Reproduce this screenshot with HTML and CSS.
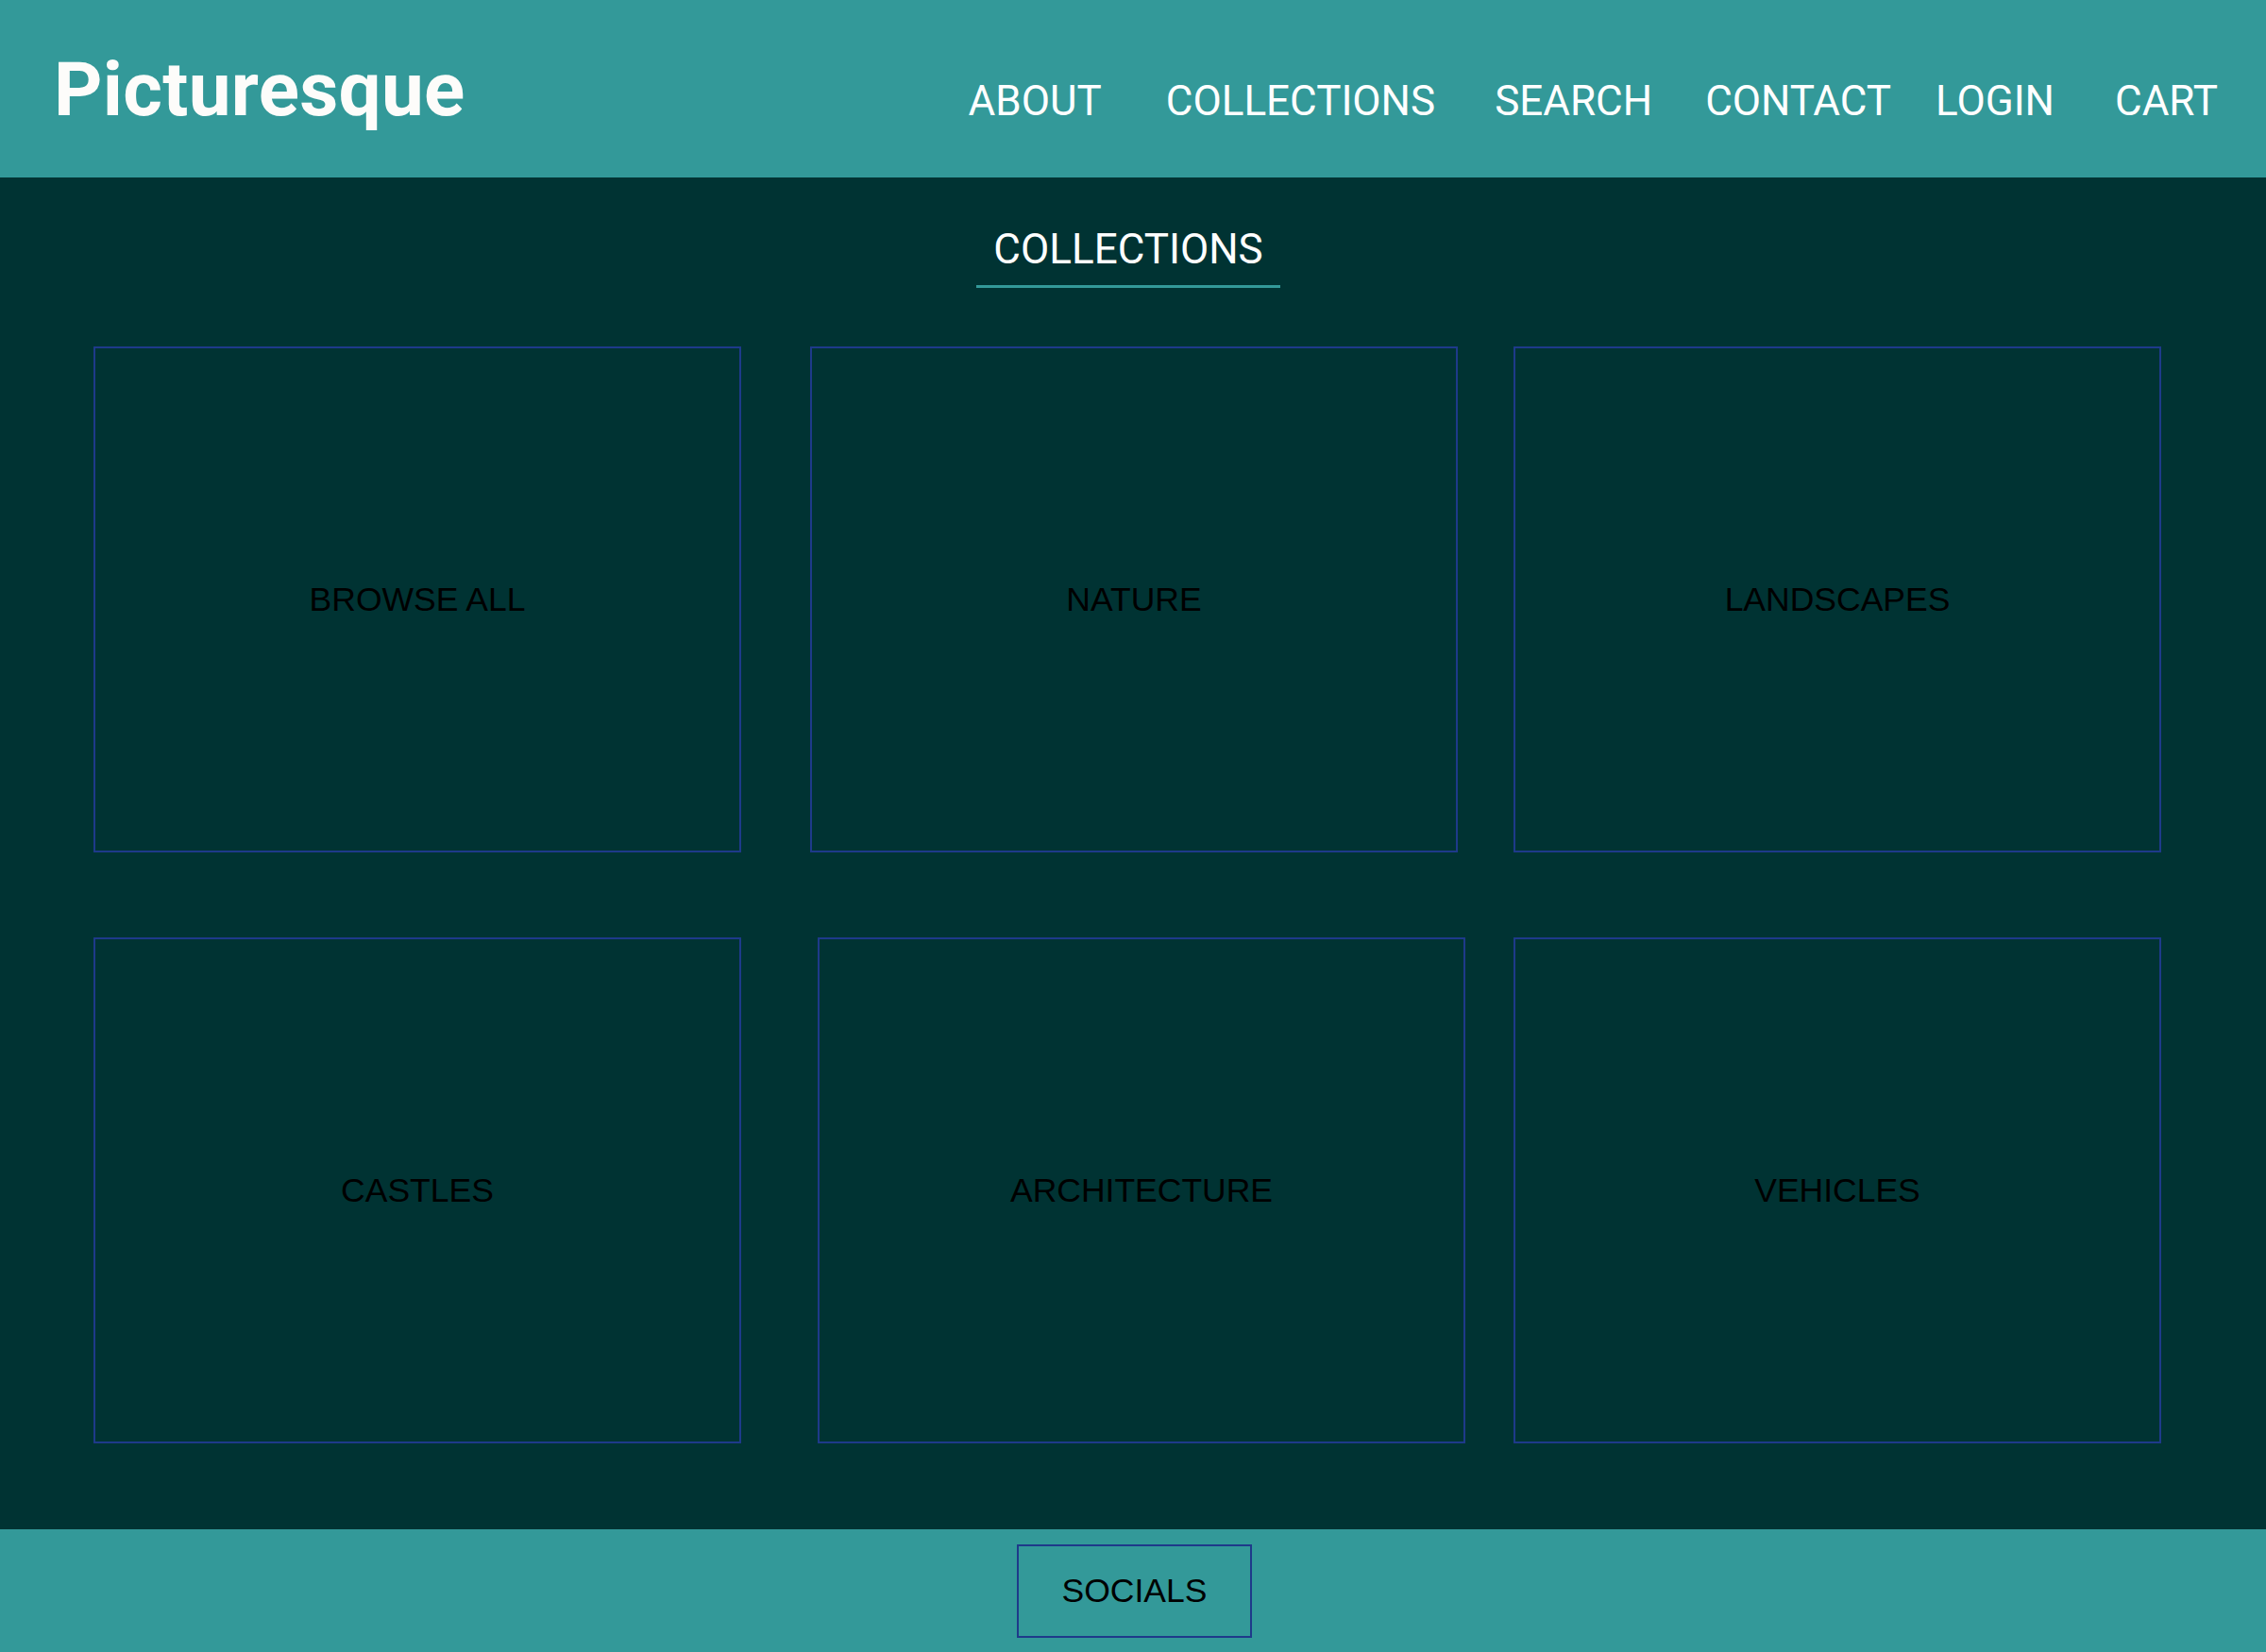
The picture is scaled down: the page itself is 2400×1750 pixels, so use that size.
FILE: index.html
```html
<!DOCTYPE html>
<html lang="en">
<head>
<meta charset="utf-8">
<title>Picturesque - Collections</title>
<link rel="stylesheet" href="styles.css">
</head>
<body>
<header class="site-header">
  <div class="logo">Picturesque</div>
  <nav class="nav">
    <a class="nav-item n-about" href="#">ABOUT</a>
    <a class="nav-item n-collections" href="#">COLLECTIONS</a>
    <a class="nav-item n-search" href="#">SEARCH</a>
    <a class="nav-item n-contact" href="#">CONTACT</a>
    <a class="nav-item n-login" href="#">LOGIN</a>
    <a class="nav-item n-cart" href="#">CART</a>
  </nav>
</header>
<main class="main">
  <div class="title-wrap">
    <h2 class="title">COLLECTIONS</h2>
  </div>
  <div class="cards">
    <div class="card">BROWSE ALL</div>
    <div class="card shift-1">NATURE</div>
    <div class="card">LANDSCAPES</div>
    <div class="card">CASTLES</div>
    <div class="card shift-2">ARCHITECTURE</div>
    <div class="card">VEHICLES</div>
  </div>
</main>
<footer class="site-footer">
  <div class="socials">SOCIALS</div>
</footer>
</body>
</html>
```
FILE: styles.css
```css
* { box-sizing: border-box; }
html, body { margin: 0; padding: 0; }
body {
  width: 2400px;
  height: 1750px;
  overflow: hidden;
  background: #003333;
  font-family: "Liberation Sans", Arial, sans-serif;
}
.site-header {
  height: 188px;
  background: #339999;
  display: flex;
  align-items: baseline;
  padding: 48px 51px 0 57px;
}
.logo {
  font-family: Roboto, "Noto Sans", sans-serif;
  font-weight: 700;
  font-size: 80px;
  color: #fdfcfa;
  letter-spacing: 0.3px;
}
.nav {
  margin-left: auto;
  display: flex;
  align-items: baseline;
}
.nav-item {
  font-family: Roboto, "Noto Sans", sans-serif;
  font-size: 44px;
  color: #ffffff;
  text-decoration: none;
}
.n-collections { margin-left: 68px; }
.n-search { margin-left: 63px; }
.n-contact { margin-left: 56px; }
.n-login { margin-left: 47px; }
.n-cart { margin-left: 64px; }
.main {
  height: 1432px;
  padding-top: 50px;
}
.title-wrap {
  text-align: center;
  padding-right: 10px;
}
.title {
  display: inline-block;
  margin: 0;
  font-family: Roboto, "Noto Sans", sans-serif;
  font-weight: 400;
  font-size: 44px;
  color: #ffffff;
  padding: 0 18px 12px;
  border-bottom: 3px solid #339999;
}
.cards {
  margin-top: 62px;
  padding-left: 99px;
  display: grid;
  grid-template-columns: 686px 686px 686px;
  grid-auto-rows: 536px;
  column-gap: 66px;
  row-gap: 90px;
}
.card {
  border: 2px solid #1e3a8a;
  display: flex;
  align-items: center;
  justify-content: center;
  font-size: 35.5px;
  color: #000000;
}
.shift-1 { margin-left: 7px; margin-right: -7px; }
.shift-2 { margin-left: 15px; margin-right: -15px; }
.site-footer {
  height: 130px;
  background: #339999;
  display: flex;
  justify-content: center;
  padding-top: 16px;
}
.socials {
  width: 249px;
  height: 99px;
  border: 2px solid #1e3a8a;
  display: flex;
  align-items: center;
  justify-content: center;
  font-size: 35.5px;
  color: #000000;
  margin-left: 3px;
}
```
